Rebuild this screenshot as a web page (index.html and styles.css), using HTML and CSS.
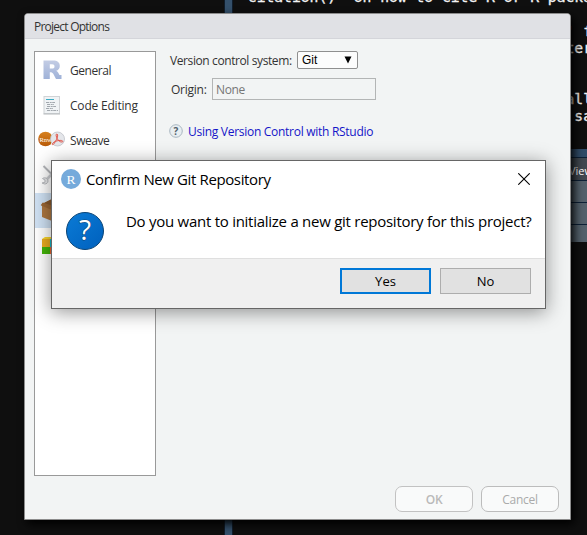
FILE: index.html
```html
<!DOCTYPE html>
<html lang="en">
<head>
<meta charset="utf-8">
<title>Project Options</title>
<link rel="stylesheet" href="styles.css">
</head>
<body>
<div class="desktop">
  <div class="ide">
    <div class="splitter"></div>
    <div class="workspace">
      <pre class="console">'citation()' on how to cite R or R packages

                                     ' for
                                     terface


                                     ally
                                      sa</pre>
      <div class="pane">
        <div class="pane-top"></div>
        <div class="pane-tabs"><span>Viewer</span></div>
        <div class="pane-row"></div>
        <div class="pane-row"></div>
        <div class="pane-row last"></div>
      </div>
    </div>
  </div>

  <section class="options">
    <header class="options-title"><span>Project Options</span></header>
    <div class="options-body">
      <ul class="sections">
        <li>
          <svg class="icon" width="30" height="24" viewBox="0 0 30 24"><defs><linearGradient id="rg" x1="0" y1="0" x2="0" y2="1"><stop offset="0" stop-color="#c3cce4"/><stop offset="1" stop-color="#9fb2d8"/></linearGradient></defs><path fill="url(#rg)" fill-rule="evenodd" d="M5.500 2.500H15c4.500 0 6.800 2 6.800 5.400 0 2.500-1.400 4.200-3.600 4.800 1.600.8 2.400 2.400 3.300 4.300h2v4H18c-2.300-4-2.500-6.500-5-6.800h-1.200V21H5.500zM11.800 6.300v4.200h2.400c1.500 0 2.300-.8 2.300-2.100s-.8-2.100-2.300-2.100z"/></svg>
          <span>General</span>
        </li>
        <li>
          <svg class="icon" width="30" height="24" viewBox="0 0 30 24"><rect x="6" y="3.500" width="15.500" height="17" fill="#f0f3f5" stroke="#d0d3d6"/><path d="M5.500 21h16.500" stroke="#b5b9bc"/><path d="M8 6.500h8" stroke="#39abc4" stroke-width="1.200"/><path d="M8 9.500h9M9 11.500h7M9 13.500h9M8 15.500h7M9 17.500h11" stroke="#a2a8ae" stroke-dasharray="3 .7 2 .5"/></svg>
          <span class="wide">Code Editing</span>
        </li>
        <li>
          <svg class="icon" width="30" height="24" viewBox="0 0 30 24"><defs><linearGradient id="og" x1="0" y1="0" x2="0" y2="1"><stop offset="0" stop-color="#d7821f"/><stop offset="1" stop-color="#b85a08"/></linearGradient></defs><circle cx="7.500" cy="11" r="7.300" fill="url(#og)"/><text class="rnw" x="1.500" y="13.500">Rnw</text><circle cx="19.500" cy="11" r="7" fill="#e4e6ea" stroke="#bfc2c8" stroke-width=".8"/><path d="M19 6c-1.500 0-1 2 .2 4.500 1 2.200 3 3.800 5 3.500 1.500-.3.300-1.800-2-1.600-3 .1-6.500 1.200-7.600 3-1 1.500.3 1.800 1.500.2C17.600 13.500 20 9 19.700 7z" fill="none" stroke="#e2574c" stroke-width="1"/></svg>
          <span>Sweave</span>
        </li>
        <li>
          <svg class="icon" width="30" height="24" viewBox="0 0 30 24"><path d="M5.500 3l12 12" stroke="#b3b5b9" stroke-width="2"/><path d="M8 17L20 5" stroke="#cbcdd1" stroke-width="2.600"/><path d="M4.500 15.500c2-1.500 5.500-.5 5.500 2.500 0 2-1.500 3-3.500 3l-2.500-1 3-.8V17z" fill="#e6e7e9" stroke="#b9bbbf" stroke-width="1"/></svg>
        </li>
        <li class="selected">
          <svg class="icon" width="30" height="24" viewBox="0 0 30 24"><path d="M4 6l10-5 7 5v13l-7 4-10-4z" fill="#ad7740"/><path d="M4 6l10-5 7 3-9 6z" fill="#88592c"/><path d="M2.800 7l2-2.500L15 8l-1 4-11-4.500z" fill="#9b6633"/><path d="M13 8v14l8-4V5z" fill="#8c5728"/></svg>
        </li>
        <li>
          <svg class="icon" width="30" height="24" viewBox="0 0 30 24"><path d="M4 6l3-2h11v2z" fill="#f9d52b"/><path d="M4 6h8v8H4z" fill="#ebac20"/><path d="M12 6h8v8h-8z" fill="#14bdd0"/><path d="M4 14h8v7H4z" fill="#43b509"/><path d="M12 14h8v7h-8z" fill="#ef632d"/></svg>
        </li>
      </ul>
      <div class="panel">
        <div class="row row-vcs"><label>Version control system:</label><div class="select"><span>Git</span><svg width="8" height="8" viewBox="0 0 8 8"><path d="M.5 .5h7L4 7.500z"/></svg></div></div>
        <div class="row row-origin"><label>Origin:</label><div class="input"><span>None</span></div></div>
        <div class="row row-help"><svg width="14" height="14" viewBox="0 0 14 14"><circle cx="7" cy="7" r="6.300" fill="#e8eef1" stroke="#a9b6c0"/><text class="help-q" x="7" y="10.500" text-anchor="middle">?</text></svg><a>Using Version Control with RStudio</a></div>
      </div>
    </div>
    <footer class="options-footer">
      <button class="rbtn ok"><span>OK</span></button>
      <button class="rbtn"><span>Cancel</span></button>
    </footer>
  </section>

  <section class="confirm">
    <header class="confirm-title">
      <svg width="20" height="20" viewBox="0 0 20 20"><circle cx="10" cy="10" r="10" fill="#75aadb"/><text class="logo-r" x="10" y="14.500" text-anchor="middle">R</text></svg>
      <span>Confirm New Git Repository</span>
      <svg class="close" width="12" height="12" viewBox="0 0 12 12"><path d="M.3 .3l11.400 11.400M11.700 .3L.3 11.700" stroke="#000" stroke-width="1.100"/></svg>
    </header>
    <div class="confirm-body">
      <svg width="40" height="40" viewBox="0 0 40 40"><defs><linearGradient id="bg" x1="0" y1="0" x2="1" y2="1"><stop offset="0" stop-color="#0a7bd6"/><stop offset="1" stop-color="#0060bd"/></linearGradient></defs><circle cx="20" cy="20" r="18.500" fill="url(#bg)" stroke="#0b4577"/><text class="big-q" x="20" y="29" text-anchor="middle">?</text></svg>
      <p>Do you want to initialize a new git repository for this project?</p>
    </div>
    <footer class="confirm-footer">
      <button class="wbtn primary"><span>Yes</span></button>
      <button class="wbtn"><span>No</span></button>
    </footer>
  </section>
</div>
</body>
</html>
```
FILE: styles.css
```css
* { box-sizing: border-box; }
body { margin: 0; font-family: "Open Sans", "Noto Sans", sans-serif; }
.desktop { position: relative; width: 587px; height: 535px; overflow: hidden; background: #0f0f0f; }
.ide { display: flex; height: 100%; padding-left: 224px; }
.splitter { width: 9px; flex: none; background: #34506b; border: solid #101d2b; border-width: 0 1px; }
.workspace { flex: 1; min-width: 0; overflow: hidden; }
.console { margin: -12px 0 0 6px; height: 161px; font: 14.67px/17px "DejaVu Sans Mono", monospace; color: #f3f3f3; -webkit-text-stroke: .3px #f3f3f3; }
.pane { height: 93px; background: #0d2036; display: flex; flex-direction: column; gap: 1px; }
.pane-top { height: 8px; background: #304b67; }
.pane-tabs { height: 22px; background: #414850; color: #fff; font-size: 11px; line-height: 25px; padding-left: 336px; }
.pane-row { height: 21px; background: #53606b; }
.pane-row.last { height: 17px; }

.options {
  position: absolute; left: 24px; top: 13px; width: 547px; height: 507px;
  background: #f2f4f4; border: 1px solid #8c8c8c; border-radius: 4px 4px 0 0;
  box-shadow: 3px 4px 10px #000; display: flex; flex-direction: column; overflow: hidden; color: #333;
}
.options-title { height: 25px; flex: none; background: #e0e1e5; border-bottom: 1px solid #d4d5da; padding-left: 9px; font-size: 12px; line-height: 26px; letter-spacing: -.76px; }
.options-body { display: flex; padding: 12px 9px 0; flex: none; height: 437px; }
.sections { list-style: none; margin: 0; padding: 1px 0; width: 122px; height: 425px; background: #fff; border: 1px solid #999; font-size: 12px; }
.sections li { height: 35px; display: flex; align-items: center; padding-left: 3px; }
.sections li span { margin-left: 2px; letter-spacing: -.45px; margin-top: -1px; white-space: nowrap; }
.sections li .wide { letter-spacing: -.2px; }
.sections .selected { background: #cfe1f3; }
.icon { flex: none; margin-top: -2px; }
.rnw { font: 6.500px "Liberation Serif", serif; fill: #fff; }
.panel { padding-left: 14px; font-size: 12px; }
.row { display: flex; align-items: center; white-space: nowrap; letter-spacing: -.4px; }
.row-vcs { height: 18px; gap: 4px; }
.row-vcs label { width: 123px; line-height: 18px; padding-top: 2px; }
.select { width: 61px; height: 18px; border: 1px solid #8f8f8f; border-radius: 2px; background: #fcfcfc; display: flex; align-items: center; justify-content: space-between; padding: 0 5px 0 4px; font: 12px "Liberation Sans", sans-serif; color: #000; letter-spacing: 0; }
.row-origin { height: 22px; margin-top: 9px; gap: 5px; }
.row-origin label { width: 37px; padding-left: 1px; padding-top: 2px; line-height: 18px; letter-spacing: -.25px; }
.input { width: 164px; height: 22px; border: 1px solid #b3b5b5; padding-left: 3px; line-height: 22px; color: #767676; }
.row-help { margin-top: 22px; height: 18px; gap: 5px; letter-spacing: -.28px; }
.row-help a { color: #1515c8; padding-top: 1px; }
.row-help svg { margin-left: -1px; }
.help-q { font: bold 10px "Open Sans", sans-serif; fill: #52606b; letter-spacing: 0; }
.options-footer { display: flex; justify-content: flex-end; gap: 8px; padding: 10px 11px 0; }
.rbtn { width: 78px; height: 26px; border: 1px solid #bcbcbc; border-radius: 7px; background: #f9fafa; color: #aaa; font: 12px "Open Sans", sans-serif; letter-spacing: -.3px; padding: 0; }
.rbtn.ok { font-weight: 600; color: #b9b9b9; border-color: #c2c2c2; }

.confirm {
  position: absolute; left: 51px; top: 160px; width: 495px; height: 149px;
  background: #fff; border: 1px solid #666; box-shadow: 0 3px 18px rgba(0,0,0,.42);
  display: flex; flex-direction: column; color: #000;
}
.confirm-title { height: 36px; flex: none; display: flex; align-items: center; padding: 0 15px 0 9px; font-size: 15px; }
.confirm-title span { margin-left: 5px; flex: 1; white-space: nowrap; letter-spacing: -.38px; }
.confirm-body { height: 61px; flex: none; display: flex; padding: 14px 0 0 13px; }
.confirm-body svg { flex: none; }
.confirm-body p { margin: 0 0 0 21px; font-size: 15px; line-height: 20px; white-space: nowrap; letter-spacing: -.265px; }
.logo-r { font: 13.500px "Liberation Serif", serif; fill: #fff; }
.big-q { font: 28px "Open Sans", sans-serif; fill: #fff; stroke: #0b4577; stroke-width: 1px; paint-order: stroke; }
.confirm-footer { flex: 1; background: #f0f0f0; border-top: 1px solid #dfdfdf; display: flex; justify-content: flex-end; gap: 9px; padding: 9px 14px 0; }
.wbtn { width: 91px; height: 26px; border: 1px solid #adadad; background: #e1e1e1; font: 13px "Open Sans", sans-serif; color: #000; padding: 0; }
.wbtn.primary { border: 2px solid #0078d7; }
```
